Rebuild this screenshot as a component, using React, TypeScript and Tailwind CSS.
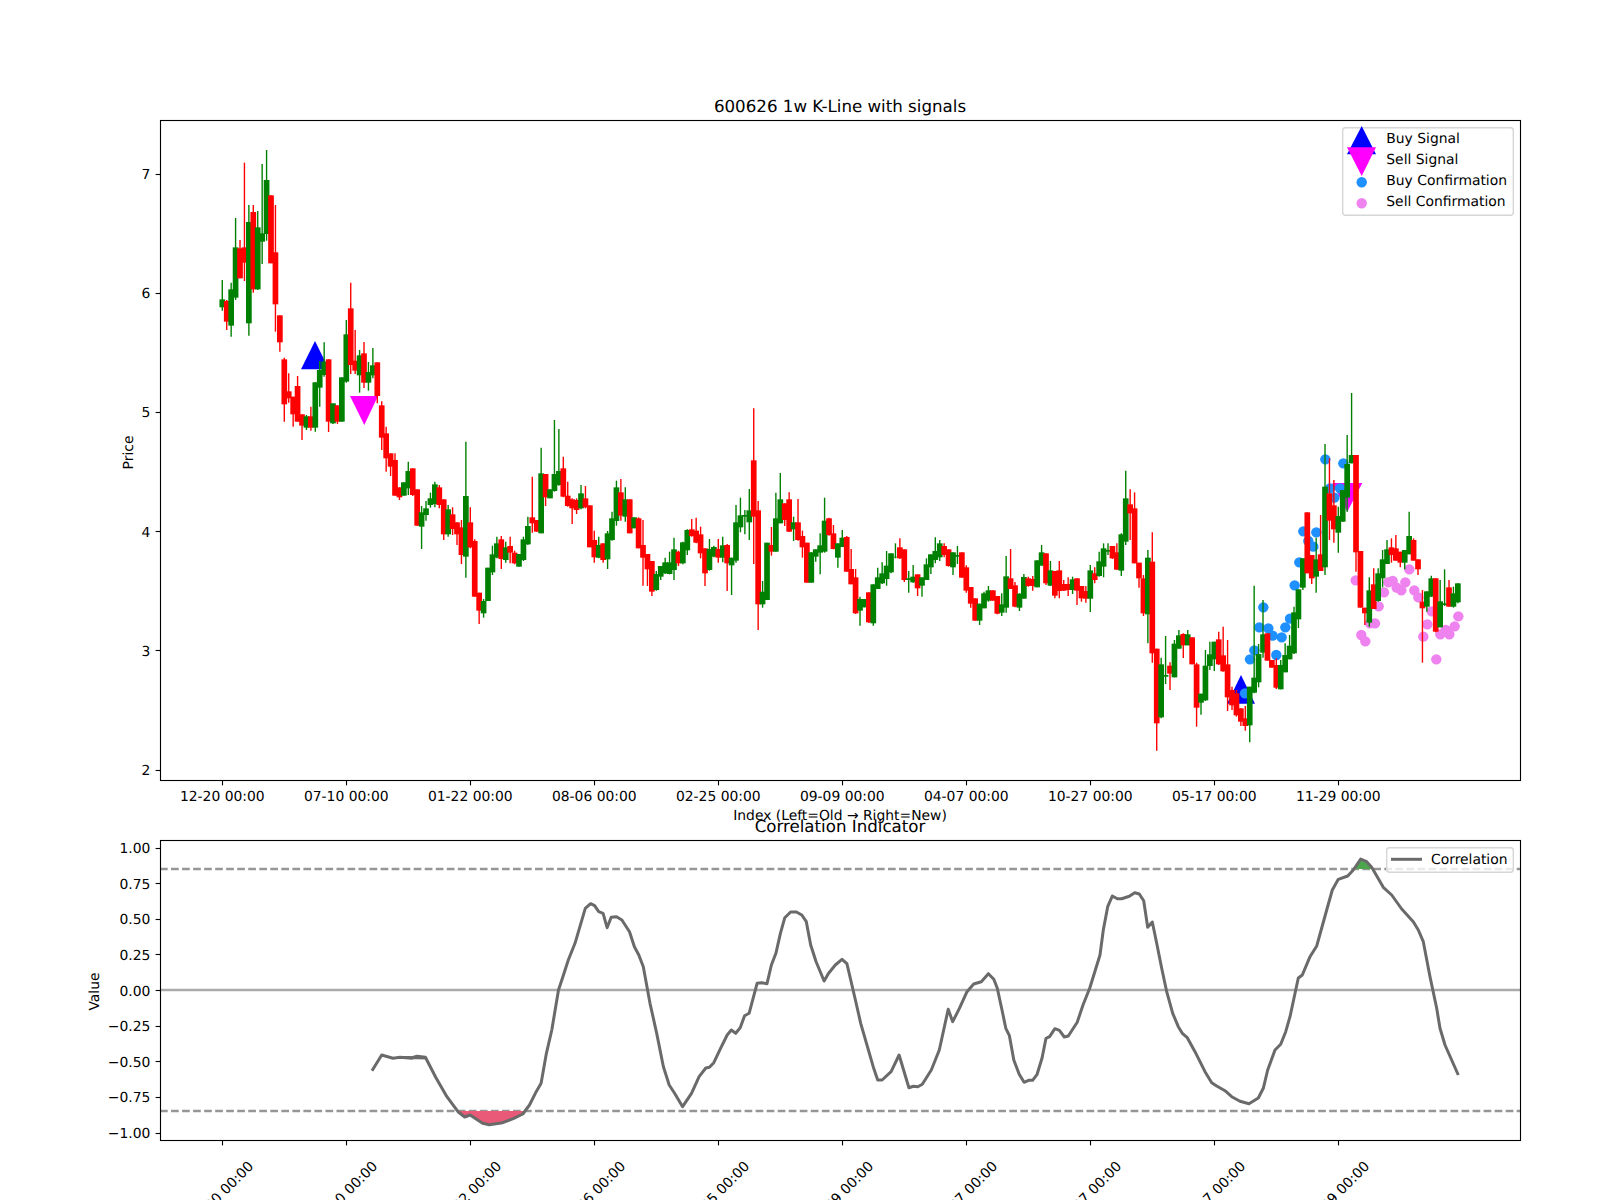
const P = 124 / 28;
const bx = (i: number) => 222.3 + P * i;
const snap = (v: number) => Math.floor(v) + 0.5;

type Row = number[]; // c(1 green, 0 red), bodyTop, bodyBottom, wickTop, wickBottom (in crop rows at 3x)
const GROUPS: [number, Row[]][] = [
  [100, [
    [1,598,622,540,632],[0,603,665,600,690],[1,568,677,548,710],[1,442,593,354,600],[0,445,535,420,535],[0,442,488,188,543],
    [1,366,670,315,707],[0,336,568,315,578],[1,382,568,333,570],[1,400,425,192,492],[1,240,402,150,422],[0,286,490,286,490],
    [0,457,613,315,695],[0,646,727,646,755],[0,778,913,773,965],[0,874,895,820,908],[0,890,943,890,980],[0,858,965,828,965],
    [0,943,977,943,1020],[1,949,983,945,990],[0,949,983,920,992],[1,847,983,847,995],[1,810,863,783,920],[1,785,825,727,830],
    [0,778,965,778,996],[1,910,970,910,972],[0,916,965,916,972],[1,832,965,832,965],[1,703,845,660,848],[0,625,795,548,822],
    [0,782,812,690,822],[1,766,826,750,878],[0,760,848,726,864],[1,816,848,786,872],[1,796,826,744,835],[0,787,888,787,910],
    [0,916,1013,904,1050],
  ]],
  [400, [
    [0,100,175,80,215],[0,160,200,160,228],[0,180,287,160,287],[0,262,292,262,300],[1,247,287,247,287],[1,213,265,185,285],
    [0,205,285,205,288],[0,268,377,268,377],[1,337,380,318,447],[1,325,345,303,362],[1,295,315,278,323],[1,253,312,245,322],
    [0,262,315,255,325],[0,298,403,298,420],[1,328,403,315,410],[0,343,387,322,405],[0,367,403,367,435],[0,382,465,360,492],
    [1,288,470,125,533],[0,367,442,322,445],[0,423,590,418,590],[0,578,632,578,672],[1,603,640,597,653],[1,503,603,503,603],
    [1,463,517,437,525],[1,430,473,410,475],[0,418,477,408,507],[1,442,480,425,488],[0,438,458,410,490],[0,458,490,452,493],
    [1,462,500,462,500],[1,418,480,410,483],[1,378,433,350,435],[0,352,370,230,398],[0,360,395,360,395],[1,220,400,143,400],
    [0,222,292,222,318],[1,268,295,268,295],[1,222,273,60,275],[1,213,255,87,257],[0,205,290,170,292],[0,287,318,245,320],
    [0,298,325,295,372],[0,300,330,295,342],[1,280,325,255,328],[0,295,322,258,325],[0,316,442,316,442],[0,420,472,392,488],
    [1,435,473,410,475],[0,430,480,430,488],[1,400,478,393,507],[1,355,420,335,422],[1,262,363,242,377],[0,277,347,237,362],
    [1,298,350,262,365],[0,298,400,298,400],[1,352,385,352,385],[0,355,445,352,445],
  ]],
  [400, [
    [0,435,473,360,557],[0,462,508,462,558],[0,483,575,483,588],[1,522,570,513,572],[1,498,530,498,540],[1,487,520,473,522],
    [1,487,522,455,523],[1,448,510,413,540],[0,455,490,452,498],[1,427,490,425,493],[1,390,451,388,465],[0,388,408,357,410],
    [0,392,428,353,430],[0,403,460,380,475],[0,445,520,445,558],[1,447,510,417,512],[1,441,470,437,472],[0,447,473,417,488],
    [1,436,473,410,487],[0,435,490,432,573],[1,473,496,473,585],[1,367,482,315,488],[1,346,382,293,397],[1,345,350,330,403],
    [1,331,367,267,420],[0,181,350,25,492],[0,331,613,303,690],[1,575,613,543,623],[1,428,600,428,600],[0,435,455,381,467],
    [1,355,455,278,455],[1,298,370,219,370],[0,310,360,310,378],[0,298,395,277,396],[1,367,388,350,423],[0,367,420,297,422],
    [0,408,442,392,473],[0,428,548,428,548],[1,457,548,457,548],[1,448,470,448,485],[1,436,458,400,523],[1,362,455,293,458],
    [0,355,405,353,407],[0,400,447,375,448],[1,430,473,430,503],[1,413,441,390,441],[0,411,515,408,515],[0,507,553,447,553],
    [0,532,640,507,642],[1,597,632,590,677],[1,597,622,597,622],[0,577,667,577,669],[1,553,670,553,677],[1,532,567,503,567],
    [1,520,550,487,552],[1,497,537,453,557],[1,460,517,460,520],[1,470,472,430,475],
  ]],
  [460, [
    [0,262,295,235,297],[0,268,360,268,366],[1,355,360,333,398],[1,350,367,315,368],[0,343,385,343,408],[1,352,377,352,410],
    [1,313,360,295,360],[1,283,322,283,342],[1,273,300,232,310],[1,250,292,240,303],[0,258,285,250,292],[0,268,318,268,320],
    [1,277,322,277,345],[1,285,290,258,312],[0,277,353,277,353],[0,322,392,316,398],[0,381,431,381,443],[0,415,482,415,482],
    [1,431,482,431,495],[1,400,445,395,445],[1,391,422,378,425],[0,391,422,391,422],[0,408,461,408,463],[1,433,458,400,468],
    [1,349,443,288,458],[0,355,387,267,387],[0,376,440,366,442],[1,401,443,400,453],[1,351,416,342,416],[0,355,378,350,380],
    [0,357,378,348,392],[1,301,382,301,382],[1,277,317,255,317],[0,280,370,280,375],[1,331,377,303,378],[0,333,407,333,415],
    [0,331,393,303,415],[0,372,392,360,393],[0,372,390,352,408],[1,358,390,350,402],[0,355,392,355,435],[0,378,415,378,425],
    [0,393,416,378,428],[1,331,416,315,456],[0,340,360,322,370],[1,304,348,275,350],[1,265,320,250,352],[1,270,275,250,285],
    [0,258,295,258,297],[0,277,329,250,330],[1,223,332,220,348],
  ]],
  [490, [
    [1,25,155,-58,165],[0,43,70,-2,150],[0,55,220,7,220],[0,218,265,218,293],[0,265,370,255,378],[1,203,373,180,460],
    [0,215,490,127,518],[0,476,700,476,782],[1,523,682,503,685],[1,555,560,438,582],[0,527,551,517,600],[1,461,562,450,562],
    [1,436,476,420,476],[0,432,466,430,504],[1,433,466,420,466],[0,442,523,442,523],[0,523,653,518,710],[1,611,638,611,674],
    [1,527,631,480,633],[1,493,528,455,540],[1,455,508,455,543],[0,448,523,425,525],[0,496,544,410,545],[0,523,622,450,663],
    [0,600,646,590,660],[0,610,676,600,680],[0,655,695,655,708],[0,685,708,648,722],[1,590,706,590,757],[1,563,608,287,610],
  ]],
  [430, [
    [1,672,757,642,772],[1,613,668,510,683],[0,610,692,610,692],[0,690,713,690,713],[0,705,773,685,777],[1,705,778,690,778],
    [1,675,727,640,727],[1,647,688,615,688],[1,547,670,530,672],[1,478,568,478,594],[1,385,473,385,480],[0,247,430,247,430],
    [0,375,445,375,462],[1,388,440,323,488],[0,373,423,255,423],[1,170,412,42,435],[0,190,272,85,330],[0,226,298,150,338],
    [1,258,308,230,368],[1,180,275,180,275],[1,102,203,15,245],[1,75,100,-111,100],[0,75,367,75,425],[0,363,533,363,533],
    [0,533,550,533,585],[1,481,578,442,590],[0,463,537,415,537],[1,430,513,415,515],[1,388,445,360,472],[1,358,402,330,402],
    [0,352,375,325,398],[0,355,392,315,392],[0,365,398,365,412],[1,360,398,360,418],[1,318,373,245,373],[0,330,392,325,392],
    [0,388,418,388,435],[0,515,535,480,698],[1,484,530,484,545],[1,445,500,437,500],[0,445,605,445,607],[1,514,592,450,592],
    [1,520,525,418,528],[0,472,530,450,530],[1,490,530,470,533],[1,460,517,460,520],
  ]],
];

const CANDLES = (() => {
  const out: { x: number; c: string; t: number; b: number; h: number; l: number }[] = [];
  let i = 0;
  for (const [y0, rows] of GROUPS) {
    for (const r of rows) {
      out.push({
        x: bx(i),
        c: r[0] ? "#008000" : "#ff0000",
        t: y0 + r[1] / 3,
        b: y0 + r[2] / 3,
        h: y0 + r[3] / 3,
        l: y0 + r[4] / 3,
      });
      i++;
    }
  }
  return out;
})();

const BLUE = [
  [376,88],[430,100],[390,175],[420,175],[403,203],[310,304],[349,307],[325,333],[340,350],[298,397],[284,466],
  [190,532],[178,592],[205,595],[218,617],[245,622],[256,592],[270,566],[163,661],[150,688],[229,675],[135,790],
];
const PINK = [
  [467,451],[552,487],[565,457],[578,453],[590,473],[604,481],[616,457],[628,418],[643,481],[655,502],[695,544],
  [764,589],[775,559],[536,529],[525,580],[510,580],[484,615],[496,634],[682,583],[670,620],[709,688],[721,613],
  [737,600],[748,613],
];
const dot = (p: number[]) => [1200 + p[0] / 3, 430 + p[1] / 3];

const C1 = [[372,1070.7],[381.7,1055],[393,1058.3],[400,1057.3],[411.7,1058.3],[416.7,1056.7],[426,1058]];
const C2 = [
  [0,652],[25,654],[38,649],[57,652],[80,712],[105,770],[130,815],[145,831],[157,825],[185,850],[200,854],[230,848],[255,835],[275,822],
  [290,795],[305,755],[316,730],[328,640],[340,570],[355,450],[365,410],[377,360],[392,310],[415,205],[427,191],[436,197],[445,215],[455,220],
  [464,263],[473,232],[485,230],[497,240],[514,275],[525,320],[535,345],[545,380],[560,490],[575,580],[590,680],[603,735],[615,760],[633,800],
  [653,760],[670,710],[685,684],[693,682],[703,668],[720,620],[733,585],[742,570],[752,580],[762,563],[772,527],[782,520],[800,430],[810,428],
  [822,431],[832,375],[842,340],[852,280],[862,233],[875,216],[888,216],[900,225],[910,245],[920,315],[932,365],[950,423],[960,400],[975,375],
  [990,358],[1001,371],[1020,480],[1032,550],[1060,680],[1070,720],[1080,720],[1100,695],[1118,645],[1140,743],[1150,739],[1160,740],[1170,733],
  [1190,690],[1208,630],[1228,508],[1238,545],[1253,505],[1270,455],[1285,432],[1302,425],[1318,401],[1330,418],[1338,445],[1350,520],[1357,565],
  [1365,587],[1375,660],[1387,703],[1398,727],[1408,721],[1417,721],[1427,703],[1438,655],[1447,595],[1455,590],[1467,566],[1477,571],[1488,591],
  [1497,588],[1517,547],[1530,495],[1545,445],
];
const C3 = [
  [0,585],[10,510],[23,440],[37,408],[52,416],[65,416],[88,409],[104,398],[118,402],[131,422],[143,502],[157,486],[170,550],[185,625],[200,695],
  [218,760],[235,800],[247,820],[262,833],[285,875],[315,935],[335,968],[350,978],[375,992],[395,1010],[420,1024],[447,1031],[475,1014],[490,985],
  [503,930],[525,870],[542,853],[557,815],[570,770],[595,654],[607,645],[630,590],[650,558],[680,450],[697,390],[715,358],[743,348],[760,330],
  [782,297],[800,305],[815,322],[850,382],[875,405],[905,447],[940,485],[955,510],[970,545],[990,650],[1010,745],[1020,805],[1035,855],[1075,945],
];
const z2 = (p: number[]) => [400 + p[0] / 2.24, 840 + p[1] / 3];
const z3 = (p: number[]) => [1100 + p[0] / 3, 760 + p[1] / 3];
const pts = (a: number[][]) => a.map((p) => `${p[0].toFixed(1)},${p[1].toFixed(1)}`).join(" ");
const CORR = pts([...C1, ...C2.map(z2), ...C3.map(z3)]);
const RED_FILL = pts([[458.5, 1111], ...C2.slice(6, 14).map(z2), [524, 1111]]);
const GREEN_FILL = pts([[1354, 869], [1360.7, 859], [1366.7, 861.7], [1372, 869]]);

const TICKS = [
  "12-20 00:00",
  "07-10 00:00",
  "01-22 00:00",
  "08-06 00:00",
  "02-25 00:00",
  "09-09 00:00",
  "04-07 00:00",
  "10-27 00:00",
  "05-17 00:00",
  "11-29 00:00",
];
const TX = TICKS.map((_, i) => 222.3 + 124 * i);
const Y1 = [2, 3, 4, 5, 6, 7];
const Y2 = ["1.00", "0.75", "0.50", "0.25", "0.00", "−0.25", "−0.50", "−0.75", "−1.00"];

const Frame = ({ y, h }: { y: number; h: number }) => (
  <rect x={160.5} y={y} width={1360} height={h} fill="none" stroke="#000" strokeWidth={1.11} />
);

export default function App() {
  return (
    <div className="w-[1600px] h-[1200px] overflow-hidden bg-white flex flex-col font-['DejaVu_Sans'] text-[13.89px] [text-rendering:geometricPrecision]">
      <svg className="block w-[1600px] h-[830px] shrink-0" viewBox="0 0 1600 830">
        <defs>
          <clipPath id="ax1">
            <rect x={160} y={120} width={1360} height={660} />
          </clipPath>
        </defs>
        <text x={840} y={111.7} textAnchor="middle" className="text-[16.67px]">600626 1w K-Line with signals</text>
        <g clipPath="url(#ax1)">
          <polygon points="301,369.3 315,341 329,369.3" fill="#0000ff" />
          <polygon points="1227,703.7 1241,675 1255,703.7" fill="#0000ff" />
          <polygon points="350,396 378,396 364.3,425" fill="#ff00ff" />
          <polygon points="1332.3,483 1362.3,483 1347.3,511.7" fill="#ff00ff" />
          {BLUE.map((p, i) => {
            const [x, y] = dot(p);
            return <circle key={i} cx={x} cy={y} r={5.2} fill="#1e90ff" />;
          })}
          {PINK.map((p, i) => {
            const [x, y] = dot(p);
            return <circle key={i} cx={x} cy={y} r={5.2} fill="#ee82ee" />;
          })}
          {CANDLES.map((c, i) => (
            <g key={i} stroke={c.c}>
              <line x1={c.x} x2={c.x} y1={c.h} y2={c.l} strokeWidth={1.39} />
              <line x1={c.x} x2={c.x} y1={c.t} y2={c.b} strokeWidth={5.7} />
            </g>
          ))}
        </g>
        <Frame y={120.5} h={660} />
        {TX.map((x, i) => (
          <g key={i}>
            <line x1={snap(x)} x2={snap(x)} y1={780.5} y2={785.4} stroke="#000" strokeWidth={1.11} />
            <text x={x} y={800.7} textAnchor="middle">{TICKS[i]}</text>
          </g>
        ))}
        {Y1.map((v) => {
          const y = 770 - (v - 2) * 119.2;
          return (
            <g key={v}>
              <line x1={155.6} x2={160.5} y1={snap(y)} y2={snap(y)} stroke="#000" strokeWidth={1.11} />
              <text x={150.3} y={y + 5} textAnchor="end">{v}</text>
            </g>
          );
        })}
        <text x={840} y={819.5} textAnchor="middle">Index (Left=Old → Right=New)</text>
        <text transform="translate(133 452.5) rotate(-90)" textAnchor="middle">Price</text>

        <rect x={1342.7} y={127.7} width={170.6} height={87.6} rx={2.8} fill="#fff" fillOpacity={0.8} stroke="#d6d6d6" strokeWidth={1.39} />
        <polygon points="1347,154.3 1361.7,126 1376,154.3" fill="#0000ff" />
        <polygon points="1347,147.3 1376,147.3 1361.7,176" fill="#ff00ff" />
        <circle cx={1361.7} cy={182.3} r={5.2} fill="#1e90ff" />
        <circle cx={1361.7} cy={203.3} r={5.2} fill="#ee82ee" />
        <text x={1386.3} y={142.9}>Buy Signal</text>
        <text x={1386.3} y={163.9}>Sell Signal</text>
        <text x={1386.3} y={184.9}>Buy Confirmation</text>
        <text x={1386.3} y={205.9}>Sell Confirmation</text>
      </svg>

      <svg className="block w-[1600px] h-[370px] shrink-0 overflow-visible" viewBox="0 830 1600 370">
        <defs>
          <clipPath id="ax2">
            <rect x={160} y={840} width={1360} height={300} />
          </clipPath>
        </defs>
        <text x={840} y={831.7} textAnchor="middle" className="text-[16.67px]">Correlation Indicator</text>
        <g clipPath="url(#ax2)">
          <line x1={160} x2={1520} y1={990} y2={990} stroke="#aaaaaa" strokeWidth={2.5} />
          <line x1={160} x2={1520} y1={869} y2={869} stroke="#969696" strokeWidth={2.5} strokeDasharray="7.7 3.33" />
          <line x1={160} x2={1520} y1={1111} y2={1111} stroke="#969696" strokeWidth={2.5} strokeDasharray="7.7 3.33" />
          <polygon points={RED_FILL} fill="#e85a78" />
          <polygon points={GREEN_FILL} fill="#4da64d" />
          <polyline points={CORR} fill="none" stroke="#6a6a6a" strokeWidth={3} strokeLinejoin="round" />
        </g>
        <Frame y={840.5} h={300} />
        {TX.map((x, i) => (
          <g key={i}>
            <line x1={snap(x)} x2={snap(x)} y1={1140.5} y2={1145.4} stroke="#000" strokeWidth={1.11} />
            <text transform={`translate(${x - 1.5} 1193.5) rotate(-45)`} y={5} textAnchor="middle">{TICKS[i]}</text>
          </g>
        ))}
        {Y2.map((v, i) => {
          const y = 848 + i * 35.63;
          return (
            <g key={v}>
              <line x1={155.6} x2={160.5} y1={snap(y)} y2={snap(y)} stroke="#000" strokeWidth={1.11} />
              <text x={150.3} y={y + 5} textAnchor="end">{v}</text>
            </g>
          );
        })}
        <text transform="translate(99 991.5) rotate(-90)" textAnchor="middle">Value</text>
        <rect x={1386.7} y={847.7} width={126.6} height={24.6} rx={2.8} fill="#fff" fillOpacity={0.8} stroke="#d6d6d6" strokeWidth={1.39} />
        <line x1={1391} x2={1422} y1={859.3} y2={859.3} stroke="#6a6a6a" strokeWidth={3} />
        <text x={1431} y={864.3}>Correlation</text>
      </svg>
    </div>
  );
}
